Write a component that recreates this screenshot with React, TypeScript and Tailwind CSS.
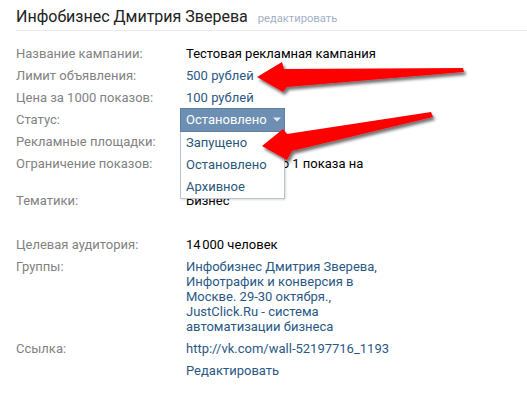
import React from "react";

const Row = ({ label, children }: { label: string; children?: React.ReactNode }) => (
  <div className="flex pt-[4px] pb-[3px] leading-[15px]">
    <div className="w-[170px] shrink-0 text-[#828282]">{label}</div>
    <div className="w-[210px]">{children}</div>
  </div>
);

export default function App() {
  return (
    <div className="relative w-[527px] h-[398px] bg-white overflow-hidden font-['Roboto',sans-serif] text-[13px]">
      <div className="ml-4 pt-[7px] pb-[2px] border-b border-[#e7e8ec] flex items-baseline">
        <span className="text-[16px] leading-[20px] text-[#222222]">Инфобизнес Дмитрия Зверева</span>
        <span className="ml-[10px] text-[11.2px] text-[#a3b1c4]">редактировать</span>
      </div>
      <div className="ml-4 mt-[11px]">
        <Row label="Название кампании:">
          <span className="text-black">Тестовая рекламная кампания</span>
        </Row>
        <Row label="Лимит объявления:">
          <span className="text-[#2a5885]">500 рублей</span>
        </Row>
        <Row label="Цена за 1000 показов:">
          <span className="text-[#2a5885]">100 рублей</span>
        </Row>
        <div className="flex h-[22px] leading-[15px]">
          <div className="w-[170px] shrink-0 pt-[4px] text-[#828282]">Статус:</div>
          <div className="relative">
            <div className="-ml-[6px] h-[24px] w-[105px] flex items-center px-[5px] bg-[#6d8fb4] border border-[#5f80a6] text-white">
              <span>Остановлено</span>
              <svg width="8" height="5" viewBox="0 0 8 5" className="ml-[6px] shrink-0">
                <path d="M0 0.5 L8 0.5 L4 4.5 Z" fill="#e4ebf3" />
              </svg>
            </div>
            <div className="absolute z-10 left-[-6px] top-[24px] w-[105px] bg-white border border-[#b9c4cf] border-t-0 shadow-[1px_1px_2px_rgba(0,0,0,0.15)]">
              <div className="h-[22px] px-[5px] flex items-center text-[#2b587a]">Запущено</div>
              <div className="h-[22px] px-[5px] flex items-center text-[#2b587a]">Остановлено</div>
              <div className="h-[22px] px-[5px] flex items-center text-[#2b587a]">Архивное</div>
            </div>
          </div>
        </div>
        <Row label="Рекламные площадки:">
          <span className="text-black">ВКонтакте</span>
        </Row>
        <Row label="Ограничение показов:">
          <span className="text-black">Не более, чем до 1 показа на человека</span>
        </Row>
        <Row label="Тематики:">
          <span className="text-black">Бизнес</span>
        </Row>
        <div className="h-[22px]" />
        <Row label="Целевая аудитория:">
          <span className="text-black">14&#8239;000 человек</span>
        </Row>
        <Row label="Группы:">
          <span className="text-[#2a5885]">
            Инфобизнес Дмитрия Зверева, Инфотрафик и конверсия в Москве. 29-30 октября., JustClick.Ru - система автоматизации бизнеса
          </span>
        </Row>
        <Row label="Ссылка:">
          <span className="text-[#2a5885]">http://vk.com/wall-52197716_1193</span>
        </Row>
        <Row label="">
          <span className="text-[#2a5885]">Редактировать</span>
        </Row>
      </div>
      <svg className="absolute left-0 top-0 z-20 pointer-events-none" width="527" height="398" viewBox="0 0 527 398">
        <defs>
          <filter id="sh" x="-20%" y="-50%" width="140%" height="200%">
            <feDropShadow dx="2" dy="3" stdDeviation="1.6" floodColor="#000" floodOpacity="0.55" />
          </filter>
        </defs>
        <polygon
          points="257,77 282,62 284,69 463,68 464,72 287,87 283,92"
          fill="#ff0000"
          filter="url(#sh)"
        />
        <polygon
          points="262,146 283,129 287,134 431,112 433,117 292,151 287,160"
          fill="#ff0000"
          filter="url(#sh)"
        />
      </svg>
    </div>
  );
}
